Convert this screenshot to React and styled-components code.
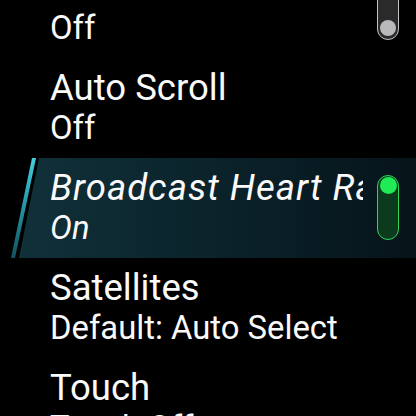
import styled, { createGlobalStyle, css } from "styled-components";

const GlobalStyle = createGlobalStyle`
  html, body {
    margin: 0;
    padding: 0;
    background: #000;
    overflow: hidden;
  }
`;

const Screen = styled.div`
  width: 416px;
  height: 416px;
  overflow: hidden;
  background: #000;
  font-family: Roboto, "Liberation Sans", sans-serif;
  color: #fafafa;
`;

// list is scrolled a bit, first item is cut at the top
const List = styled.div`
  margin-top: -42px;
  display: flex;
  flex-direction: column;
`;

const Item = styled.div`
  position: relative;
  height: 100px;
  box-sizing: border-box;
  padding: 9px 0 0 50px;
  display: flex;
  align-items: flex-start;

  ${(p) =>
    p.selected &&
    css`
      &::before {
        content: "";
        position: absolute;
        inset: 0;
        background: linear-gradient(90deg, #11323b 0%, #0b232b 50%, #06141a 100%);
        clip-path: polygon(39px 0, 100% 0, 100% 100%, 19px 100%);
      }
      &::after {
        content: "";
        position: absolute;
        inset: 0;
        background: linear-gradient(180deg, #42cfdf 0%, #2a9fb2 40%, #11525f 100%);
        clip-path: polygon(32px 0, 36px 0, 15px 100%, 11px 100%);
      }
    `}
`;

const TextCol = styled.div`
  position: relative;
  z-index: 1;
  flex: 0 0 313px;
  overflow: hidden;
  white-space: nowrap;
  font-style: ${(p) => (p.selected ? "italic" : "normal")};
`;

const Title = styled.div`
  font-size: 36.5px;
  line-height: 41px;
  letter-spacing: ${(p) => (p.selected ? "1px" : "0")};
`;

const Sub = styled.div`
  font-size: 32.8px;
  line-height: 41px;
`;

const Track = styled.div`
  position: relative;
  z-index: 1;
  margin: 8px 0 0 14px;
  width: 22px;
  height: 65px;
  box-sizing: border-box;
  border-radius: 11px;
  padding: 1px;
  display: flex;
  flex-direction: column;
  align-items: center;
  justify-content: ${(p) => (p.on ? "flex-start" : "flex-end")};
  border: 1.5px solid ${(p) => (p.on ? "#2fd35a" : "#c4c4c6")};
  background: ${(p) => (p.on ? "#0b3a1c" : "#2a2a2b")};
`;

const Knob = styled.div`
  width: ${(p) => (p.on ? "17px" : "16px")};
  height: ${(p) => (p.on ? "17px" : "16px")};
  margin-bottom: ${(p) => (p.on ? "0" : "2px")};
  border-radius: 50%;
  background: ${(p) => (p.on ? "#20ea56" : "#b9b9bd")};
`;

function Toggle({ on }) {
  return (
    <Track on={on}>
      <Knob on={on} />
    </Track>
  );
}

const items = [
  { title: "Auto Lock", value: "Off", toggle: "off" },
  { title: "Auto Scroll", value: "Off" },
  { title: "Broadcast Heart Rate", value: "On", toggle: "on", selected: true },
  { title: "Satellites", value: "Default: Auto Select" },
  { title: "Touch", value: "Touch Off" },
];

export default function App() {
  return (
    <>
      <GlobalStyle />
      <Screen>
        <List>
          {items.map((it) => (
            <Item key={it.title} selected={it.selected}>
              <TextCol selected={it.selected}>
                <Title selected={it.selected}>{it.title}</Title>
                <Sub>{it.value}</Sub>
              </TextCol>
              {it.toggle && <Toggle on={it.toggle === "on"} />}
            </Item>
          ))}
        </List>
      </Screen>
    </>
  );
}
